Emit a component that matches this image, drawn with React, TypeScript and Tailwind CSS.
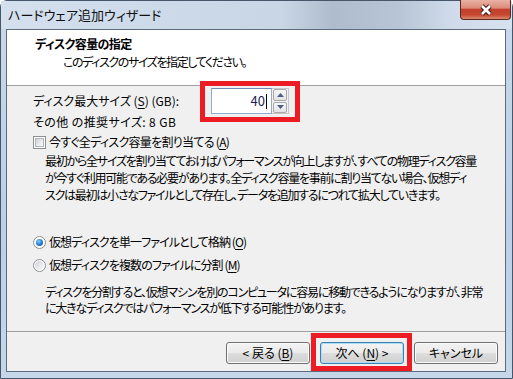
import React from "react";

const Acc = ({ k }: { k: string }) => (
  <>
    (<span className="underline underline-offset-[2px]">{k}</span>)
  </>
);

const CheckBox = () => (
  <span className="flex items-center justify-center w-[13px] h-[13px] border border-[#8e8f8f] bg-white shrink-0">
    <span className="w-[9px] h-[9px] border border-[#b1b5ba] bg-[linear-gradient(135deg,#cdd1d6_0%,#eef0f2_70%,#f7f7f7_100%)]" />
  </span>
);

const Radio = ({ checked }: { checked?: boolean }) => (
  <span className="flex items-center justify-center w-[13px] h-[13px] rounded-full border border-[#8e8f8f] bg-white shrink-0">
    {checked ? (
      <span className="w-[7px] h-[7px] rounded-full bg-[radial-gradient(circle_at_40%_35%,#8fd0ff_0%,#2c85d8_45%,#0b4f9c_100%)]" />
    ) : (
      <span className="w-[9px] h-[9px] rounded-full bg-[linear-gradient(135deg,#cfd3d8_0%,#eef0f2_70%,#f8f8f8_100%)]" />
    )}
  </span>
);

const Button = ({
  children,
  focused,
}: {
  children: React.ReactNode;
  focused?: boolean;
}) => (
  <div
    className={`flex items-center justify-center w-[84px] h-[22px] rounded-[3px] border text-[12px] bg-[linear-gradient(180deg,#f3f3f3_0%,#ebebeb_48%,#dddddd_52%,#d0d0d0_100%)] ${
      focused
        ? "border-[#3c7fb1] shadow-[inset_0_0_0_1px_#a9def8]"
        : "border-[#707070] shadow-[inset_0_0_0_1px_#fbfbfb]"
    }`}
  >
    {children}
  </div>
);

const SpinBtn = ({ up }: { up?: boolean }) => (
  <div className="flex items-center justify-center h-[12px] rounded-[2px] border border-[#a9a9a9] bg-[linear-gradient(180deg,#f6f6f6_0%,#e4e4e4_100%)]">
    <svg width="7" height="4" viewBox="0 0 7 4">
      <path d={up ? "M0 4 L3.5 0 L7 4 Z" : "M0 0 L3.5 4 L7 0 Z"} fill="#4c5e88" />
    </svg>
  </div>
);

export default function App() {
  return (
    <div className="w-[513px] h-[379px] overflow-hidden bg-white">
      <div className="relative flex flex-col w-[513px] h-[379px] rounded-t-[7px] border border-[#46566b] bg-[linear-gradient(180deg,#cbd9ea_0%,#bccfe6_60%,#c7d7ea_100%)] font-['Noto_Sans_CJK_JP',sans-serif] [font-feature-settings:'palt'] text-black">
        {/* title bar */}
        <div className="flex justify-between h-[28px] pl-[7px] pr-[1px] bg-[linear-gradient(90deg,#d4e0ee_0%,#cddaea_30%,#c9d6e6_55%,#aebccd_65%,#b7c5d6_78%,#cfdbea_88%,#d7e2ef_100%)]">
          <span className="pt-[6px] text-[13px] leading-[16px] text-[#101010]">
            ハードウェア追加ウィザード
          </span>
          <div className="-mt-px flex items-center justify-center w-[51px] h-[20px] rounded-b-[4px] border border-t-0 border-[#5a2a22] bg-[linear-gradient(180deg,#e9b1a4_0%,#dc8b79_42%,#c4402d_50%,#c5472f_78%,#dc8a6c_100%)]">
            <svg width="16" height="12" viewBox="0 0 16 12">
              <path d="M4 2 L12 10 M12 2 L4 10" stroke="#3b1d17" strokeWidth="4.6" />
              <path d="M4 2 L12 10 M12 2 L4 10" stroke="#ffffff" strokeWidth="2.6" />
            </svg>
          </div>
        </div>

        {/* client area */}
        <div className="flex flex-col h-[343px] ml-[5px] mr-[6px] border border-[#5d6b7d] bg-[#f0f0f0] text-[12px]">
          <div className="h-[56px] bg-white border-b border-[#a0a0a0] pt-[6px]">
            <div className="pl-[28px] leading-[16px] font-bold tracking-[-0.6px]">ディスク容量の指定</div>
            <div className="pl-[56px] mt-[2px] leading-[16px] tracking-[-1.4px]">
              このディスクのサイズを指定してください。
            </div>
          </div>

          <div className="h-[246px] border-b border-[#a0a0a0] pl-[26px] leading-[16px]">
            <div className="flex items-center h-[26px] mt-[2px]">
              <span className="w-[178px]">
                ディスク最大サイズ <Acc k="S" /> (GB):
              </span>
              <div className="flex h-[26px]">
                <div className="flex items-center justify-end w-[61px] pr-[4px] border border-[#8eaed0] border-t-[#6d8db5] bg-white text-[13px] text-[#1c1c50]">
                  40
                  <span className="ml-px w-px h-[15px] bg-black" />
                </div>
                <div className="flex flex-col justify-center gap-px w-[17px] px-px border border-l-0 border-[#c8c8c8]">
                  <SpinBtn up />
                  <SpinBtn />
                </div>
              </div>
            </div>
            <div className="h-[16px] tracking-[0.4px]">その他 の推奨サイズ: 8 GB</div>
            <div className="flex items-center gap-[3px] h-[16px] mt-[4px]">
              <CheckBox />
              <span className="tracking-[-0.7px]">
                今すぐ全ディスク容量を割り当てる <Acc k="A" />
              </span>
            </div>
            <div className="pl-[12px] mt-[2px] leading-[17px] whitespace-nowrap tracking-[-1.25px]">
              <div>最初から全サイズを割り当てておけばパフォーマンスが向上しますが、すべての物理ディスク容量</div>
              <div>が今すぐ利用可能である必要があります。全ディスク容量を事前に割り当てない場合、仮想ディ</div>
              <div>スクは最初は小さなファイルとして存在し、データを追加するにつれて拡大していきます。</div>
            </div>
            <div className="flex items-center gap-[3px] h-[16px] mt-[31px]">
              <Radio checked />
              <span className="tracking-[-0.9px]">
                仮想ディスクを単一ファイルとして格納 <Acc k="O" />
              </span>
            </div>
            <div className="flex items-center gap-[3px] h-[16px] mt-[7px]">
              <Radio />
              <span className="tracking-[-0.9px]">
                仮想ディスクを複数のファイルに分割 <Acc k="M" />
              </span>
            </div>
            <div className="pl-[12px] mt-[11px] leading-[16px] whitespace-nowrap tracking-[-1.2px]">
              <div>ディスクを分割すると、仮想マシンを別のコンピュータに容易に移動できるようになりますが、非常</div>
              <div>に大きなディスクではパフォーマンスが低下する可能性があります。</div>
            </div>
          </div>

          <div className="flex justify-end items-start gap-[10px] flex-1 pt-[10px] pr-[7px]">
            <Button>
              &lt; 戻る <Acc k="B" />
            </Button>
            <Button focused>
              次へ <Acc k="N" /> &gt;
            </Button>
            <Button>キャンセル</Button>
          </div>
        </div>

        {/* annotation boxes */}
        <div className="absolute left-[199px] top-[80px] w-[100px] h-[41px] border-[5px] border-[#ed1c24]" />
        <div className="absolute left-[310px] top-[332px] w-[101px] h-[38px] border-[5px] border-[#ed1c24]" />
      </div>
    </div>
  );
}
